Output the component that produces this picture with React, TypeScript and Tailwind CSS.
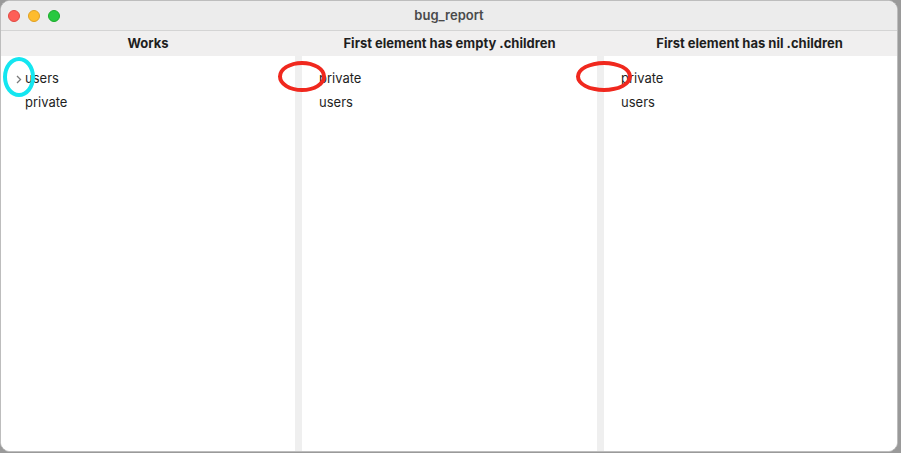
import React from 'react';

const COLS = [
  { title: 'Works', rows: ['users', 'private'], chevron: true },
  { title: 'First element has empty .children', rows: ['private', 'users'], chevron: false },
  { title: 'First element has nil .children', rows: ['private', 'users'], chevron: false },
];

function Column({ rows, chevron }: { rows: string[]; chevron: boolean }) {
  return (
    <div className={`flex flex-col bg-white pt-[11px] ${chevron ? 'pl-[24px]' : 'pl-[17px]'}`}>
      {rows.map((r, i) => (
        <div key={r} className="relative flex h-[24px] items-center text-[13px] text-[#1e1e1e]">
          {chevron && i === 0 && (
            <svg className="absolute left-[-9px] top-[8px]" width="6" height="9" viewBox="0 0 6 9">
              <path d="M1 1l3.5 3.5L1 8" fill="none" stroke="#7a7a7a" strokeWidth="1.3" />
            </svg>
          )}
          {r}
        </div>
      ))}
    </div>
  );
}

export default function App() {
  return (
    <div className="h-[453px] w-[901px] bg-[#9a9a9a]" style={{ fontFamily: 'Inter, "Liberation Sans", sans-serif' }}>
      <div className="relative flex h-[452px] w-[898px] flex-col overflow-hidden rounded-[10px] border border-[#bdbdbd] bg-white">
        <div className="relative flex h-[30px] shrink-0 items-center justify-center border-b border-[#d4d4d4] bg-[#ececec]">
          <div className="absolute left-[7px] top-[9px] flex gap-[8px]">
            <span className="h-[12px] w-[12px] rounded-full bg-[#fe5f57] border border-[#e14942]" />
            <span className="h-[12px] w-[12px] rounded-full bg-[#febc2e] border border-[#dfa023]" />
            <span className="h-[12px] w-[12px] rounded-full bg-[#28c840] border border-[#1aab29]" />
          </div>
          <span className="text-[13px] font-semibold text-[#4a4a4a]">bug_report</span>
        </div>
        <div className="grid h-[25px] shrink-0 grid-cols-[294px_7px_295px_7px_1fr] items-center bg-[#f0efef] text-[13px] font-bold text-[#1e1e1e]">
          <div className="text-center">{COLS[0].title}</div>
          <div />
          <div className="text-center">{COLS[1].title}</div>
          <div />
          <div className="pr-[2px] text-center">{COLS[2].title}</div>
        </div>
        <div className="grid flex-1 grid-cols-[294px_7px_295px_7px_1fr]">
          <Column rows={COLS[0].rows} chevron />
          <div className="bg-[#efefef]" />
          <Column rows={COLS[1].rows} chevron={false} />
          <div className="bg-[#efefef]" />
          <Column rows={COLS[2].rows} chevron={false} />
        </div>

        {/* annotation marks */}
        <div className="pointer-events-none absolute left-[2px] top-[56px] h-[40px] w-[32px] rounded-[50%] border-[4px] border-[#14e6f0]" />
        <div className="pointer-events-none absolute left-[277px] top-[60px] h-[31px] w-[48px] rounded-[50%] border-[4px] border-[#f0281e]" />
        <div className="pointer-events-none absolute left-[575px] top-[60px] h-[31px] w-[56px] rounded-[50%] border-[4px] border-[#f0281e]" />
      </div>
    </div>
  );
}
